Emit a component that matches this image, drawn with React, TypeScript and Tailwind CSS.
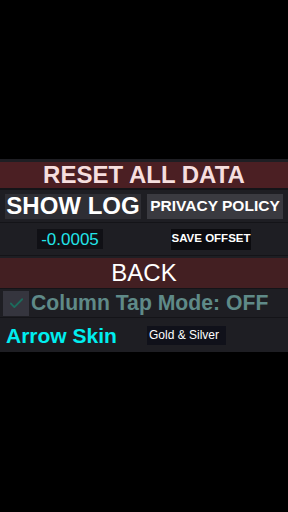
import { Check } from "lucide-react";

const font = { fontFamily: '"Liberation Sans", Arial, sans-serif' };

export default function App() {
  return (
    <div className="h-[512px] w-[288px] overflow-hidden bg-black" style={font}>
      <div className="mt-[159px] flex flex-col bg-[#1e1e23]">
        <div className="h-[3px]" />
        {/* reset */}
        <div className="flex h-[26px] items-center justify-center bg-[#4b1f23] text-[24px] font-bold leading-none text-[#f6dede]">
          RESET ALL DATA
        </div>
        <div className="h-[2px] bg-[#141418]" />

        {/* log / privacy */}
        <div className="flex h-[33px] items-center gap-[6px] px-[5px] border-b border-[#141418]">
          <button className="flex h-[25px] w-[136px] items-center justify-center bg-[#2e2e34] text-[24px] font-bold leading-none text-white">
            SHOW LOG
          </button>
          <button className="flex h-[25px] w-[136px] items-center justify-center bg-[#3a3a40] text-[15.5px] font-bold leading-none text-white">
            PRIVACY POLICY
          </button>
        </div>

        {/* offset */}
        <div className="flex h-[33px] items-center border-b border-[#141418]">
          <div className="ml-[37px] flex h-[20px] w-[66px] items-center justify-center bg-[#101015] text-[17px] leading-none text-[#22e4e8]">
            -0.0005
          </div>
          <button className="ml-[68px] flex h-[21px] w-[80px] items-center justify-center bg-[#0b0b0f] text-[11.5px] font-bold leading-none text-white">
            SAVE OFFSET
          </button>
        </div>
        <div className="h-[2px]" />

        {/* back */}
        <div className="flex h-[30px] items-center justify-center bg-[#431f22] text-[24px] leading-none text-white">
          BACK
        </div>
        <div className="h-px bg-[#141418]" />

        {/* column tap */}
        <div className="flex h-[29px] items-center gap-[2px] px-[3px] border-b border-[#141418]">
          <div className="flex h-[25px] w-[26px] items-center justify-center bg-[#35353e]">
            <Check size={17} strokeWidth={2.5} className="text-[#1c6b5c]" />
          </div>
          <span className="text-[21.2px] font-bold leading-none text-[#5f8a88]">
            Column Tap Mode: OFF
          </span>
        </div>

        {/* arrow skin */}
        <div className="flex h-[34px] items-center">
          <span className="ml-[6px] w-[141px] text-[21px] font-bold leading-none text-[#00eef0]">
            Arrow Skin
          </span>
          <div className="flex h-[19px] w-[79px] items-center pl-[2px] bg-[#10111a] text-[12px] leading-none text-white">
            Gold &amp; Silver
          </div>
        </div>
      </div>
    </div>
  );
}
